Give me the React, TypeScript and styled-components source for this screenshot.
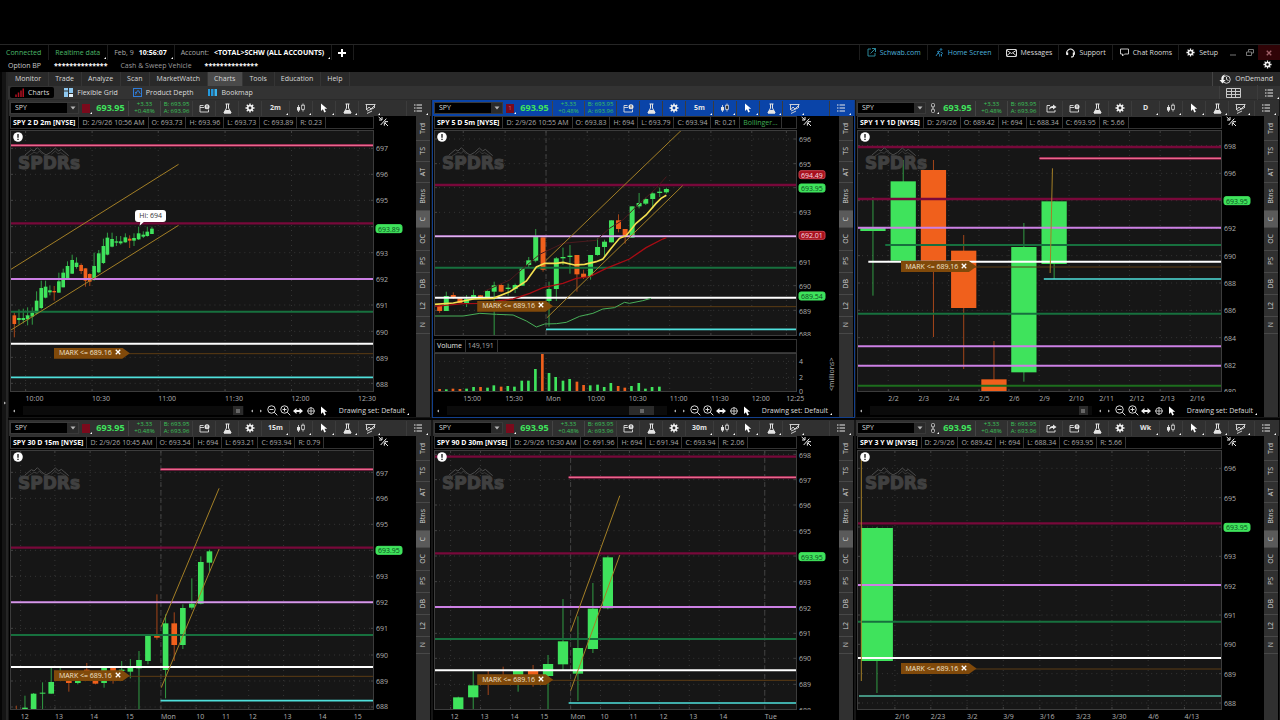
import React from 'react';
import styled, { createGlobalStyle, css } from 'styled-components';

const UP = '#3fe35c';
const DOWN = '#f0601c';
const GOLD = '#a48026';
const MAROON = '#78083a';
const VIOLET = '#cc80e4';
const GREEN = '#17703e';
const CYAN = '#4fe0dc';

const GlobalStyle = createGlobalStyle`
  * { box-sizing: border-box; }
  body { margin: 0; background: #000; }
  button, input { font: inherit; color: inherit; border: 0; padding: 0; margin: 0; background: none; }
  button { cursor: pointer; }
  a { color: inherit; text-decoration: none; }
`;

/* ---------- shell ---------- */

const Shell = styled.div`
  display: flex;
  flex-direction: column;
  height: 100vh;
  overflow: hidden;
  padding-top: 44px;
  background: #000;
  color: #d0d0d0;
  font: 7px/10px 'Open Sans', 'Noto Sans', sans-serif;
`;

const StatusBar = styled.header`
  flex: none;
  display: flex;
  align-items: center;
  height: 16px;
  border-top: 1px solid #262626;
  white-space: nowrap;
`;

const StatusItem = styled.div<{ $tone?: string }>`
  position: relative;
  display: flex;
  align-items: center;
  gap: 5px;
  height: 15px;
  padding: 0 7px 0 6px;
  color: ${(p) => p.$tone ?? '#acacac'};
  border-right: 1px solid #1c1c1c;
  b { color: #fff; }
`;

const Spacer = styled.div`
  flex: 1;
`;

const StatusLink = styled.a<{ $tone?: string }>`
  display: flex;
  align-items: center;
  gap: 4px;
  height: 15px;
  padding: 0 6px 0 7px;
  color: ${(p) => p.$tone ?? '#dcdcdc'};
  border-left: 1px solid #1c1c1c;
`;

const WindowButton = styled.button<{ $close?: boolean }>`
  display: grid;
  place-items: center;
  width: ${(p) => (p.$close ? 22 : 17)}px;
  height: 15px;
  color: #8a8a8a;
  background: ${(p) => (p.$close ? '#300407' : 'transparent')};
`;

const BalanceBar = styled.div`
  flex: none;
  display: flex;
  align-items: center;
  height: 12px;
  padding: 0 8px;
  b { color: #fff; }
`;

const BalanceItem = styled.div<{ $tone: string }>`
  display: flex;
  align-items: center;
  gap: 13px;
  padding-right: 13px;
  color: ${(p) => p.$tone};
`;

const Corner = styled.i`
  position: absolute;
  right: 1px;
  bottom: 1px;
  border: 1px solid transparent;
  border-right-color: #fff;
  border-bottom-color: #fff;
`;

const Body = styled.div`
  flex: 1;
  min-height: 0;
  display: flex;
`;

const Gutter = styled.aside`
  flex: none;
  width: 8px;
  padding-top: 328px;
  background: #141414;
  border-left: 2px solid #050505;
  border-right: 2px solid #262626;
  svg { display: block; }
`;

const Workspace = styled.main`
  flex: 1;
  min-width: 0;
`;

const MenuBar = styled.nav`
  display: flex;
  height: 14px;
  padding-left: 1px;
  background: #292929;
`;

const MenuTab = styled.button<{ $active?: boolean }>`
  padding: 0 7px 0 6px;
  border-right: 1px solid #353535;
  color: #d8d8d8;
  background: ${(p) => (p.$active ? '#4a4a4a' : 'transparent')};
`;

const OnDemand = styled.button`
  display: flex;
  align-items: center;
  gap: 4px;
  padding: 0 7px 0 6px;
  border-left: 1px solid #444;
  color: #dedede;
`;

const SubBar = styled.nav`
  display: flex;
  align-items: center;
  height: 14px;
  padding-left: 2px;
  background: #333;
  border-bottom: 1px solid #2a2a2a;
`;

const SubTab = styled.button<{ $active?: boolean }>`
  display: flex;
  align-items: center;
  gap: 4px;
  height: 11px;
  padding: 0 5px;
  margin-right: 5px;
  border-radius: 2px;
  color: #dcdcdc;
  background: ${(p) => (p.$active ? '#000' : 'transparent')};
`;

const SubTool = styled.button`
  position: relative;
  display: grid;
  place-items: center;
  width: 28px;
  height: 13px;
  border-left: 1px solid #3e3e3e;
`;

const SubGap = styled.div`
  width: 10px;
`;

const PanelGrid = styled.div`
  display: grid;
  grid-template-columns: 424fr 423fr 425fr;
  row-gap: 2px;
  background: #050505;
`;

/* ---------- chart panel ---------- */

const PanelBox = styled.section<{ $active?: boolean }>`
  display: flex;
  flex-direction: column;
  min-width: 0;
  background: #000;
  border: 1px solid ${(p) => (p.$active ? '#123f8c' : '#161616')};
  border-top: 0;
`;

const Toolbar = styled.div<{ $active?: boolean }>`
  display: flex;
  align-items: center;
  height: 16px;
  padding: 0 2px 0 1px;
  background: ${(p) => (p.$active ? '#0a44a8' : '#303030')};
`;

const SymbolField = styled.div`
  display: flex;
  width: 69px;
  height: 12px;
  background: #000;
  border: 1px solid #3a3a3a;
  input { flex: 1; min-width: 0; padding-left: 4px; color: #dcdcdc; }
`;

const DropButton = styled.button`
  display: grid;
  place-items: center;
  width: 11px;
  background: #2a2a2a;
`;

const LinkButton = styled.button`
  position: relative;
  display: grid;
  place-items: center;
  width: 14px;
  height: 14px;
`;

const LinkSwatch = styled.span`
  width: 8px;
  height: 9px;
  background: #7a0a1c;
  color: #d0606c;
  font-size: 6px;
  line-height: 9px;
  text-align: center;
`;

const LastPrice = styled.strong`
  width: 35px;
  color: #3fe35c;
  font-size: 9px;
  line-height: 14px;
  text-align: center;
`;

const MiniQuote = styled.div`
  width: 32px;
  height: 15px;
  border-left: 1px solid #444;
  color: #3cc45a;
  font-size: 6px;
  line-height: 7px;
  white-space: pre;
  text-align: center;
`;

const ToolButton = styled.button<{ $wide?: boolean }>`
  position: relative;
  display: grid;
  place-items: center;
  flex: none;
  width: ${(p) => (p.$wide ? 28 : 23)}px;
  height: 15px;
  border-left: 1px solid #3c3c3c;
  color: #e4e4e4;
  font-weight: 700;
`;

const PanelBody = styled.div`
  display: flex;
  padding-right: 1px;
`;

const ChartColumn = styled.div`
  flex: 1;
  min-width: 0;
  padding-left: 1px;
`;

const InfoRow = styled.div`
  display: flex;
  align-items: flex-start;
  height: 14px;
`;

const InfoStrip = styled.div`
  flex: 1;
  min-width: 0;
  display: flex;
  height: 13px;
  overflow: hidden;
  border: 1px solid #333;
  white-space: nowrap;
`;

const InfoCell = styled.span<{ $tone?: string; $strong?: boolean }>`
  padding: 0 3px;
  line-height: 11px;
  border-right: 1px solid #333;
  color: ${(p) => p.$tone ?? '#a8a8a8'};
  ${(p) => p.$strong && css`padding: 0 3px 0 2px; color: #fff; font-weight: 700;`}
`;

const AxisColumn = styled.div`
  flex: none;
  width: 42px;
  padding-left: 4px;
`;

const PlotRow = styled.div<{ $h: number }>`
  display: flex;
  height: ${(p) => p.$h}px;
`;

const PlotArea = styled.div`
  position: relative;
  flex: 1;
  min-width: 0;
  svg.plot { display: block; width: 100%; height: 100%; }
`;

const AxisSvg = styled.svg`
  flex: none;
  display: block;
  width: 42px;
  height: 100%;
  text { fill: #b0b0b0; font-size: 7px; }
`;

const TimeAxis = styled.div`
  height: 12px;
  padding-right: 42px;
  svg { display: block; width: 100%; height: 100%; overflow: visible; }
  text { fill: #b0b0b0; font-size: 7px; }
`;

const Watermark = styled.div`
  position: absolute;
  left: 8px;
  top: 17px;
  color: #404040;
  font: 700 17px/14px 'DejaVu Sans', sans-serif;
  -webkit-text-stroke: 1px #404040;
  svg { display: block; margin: 0 0 -1px 6px; }
`;

const Notice = styled.span`
  position: absolute;
  left: 3px;
  top: 2px;
`;

const OrderTag = styled.div`
  position: absolute;
  display: flex;
  align-items: center;
  gap: 3px;
  width: 76px;
  height: 11px;
  margin-top: -6px;
  padding-left: 5px;
  background: #80490a;
  color: #f0e2cc;
  white-space: nowrap;
  clip-path: polygon(0 0, 90% 0, 100% 50%, 90% 100%, 0 100%);
`;

const Callout = styled.div`
  position: absolute;
  padding: 1px 4px 0;
  height: 12px;
  border-radius: 3px;
  background: #fff;
  color: #333;
`;

const ScrollRow = styled.div`
  display: flex;
  align-items: center;
  height: 13px;
  padding: 0 6px 0 1px;
  color: #c8c8c8;
`;

const ScrollTrack = styled.div`
  flex: 1;
  display: flex;
  height: 9px;
  margin-left: 6px;
  background: #0b0b0b;
`;

const ScrollThumb = styled.span<{ $left: number; $w: number }>`
  flex: none;
  display: grid;
  place-items: center;
  margin-left: ${(p) => p.$left}%;
  width: ${(p) => p.$w}px;
  height: 9px;
  background: #2b2b2b;
`;

const ScrollTools = styled.div`
  display: flex;
  align-items: center;
  margin-left: 4px;
`;

const ScrollTool = styled.button<{ $narrow?: boolean }>`
  display: grid;
  place-items: center;
  width: ${(p) => (p.$narrow ? 9 : 13)}px;
  height: 12px;
  svg { display: block; }
`;

const DrawingSet = styled.button`
  position: relative;
  margin-left: 8px;
  padding-right: 5px;
  color: #dcdcdc;
  white-space: nowrap;
`;

const SideTabs = styled.nav`
  flex: none;
  display: flex;
  flex-direction: column;
  width: 14px;
  background: #303030;
`;

const SideTab = styled.button<{ $h: number; $active?: boolean }>`
  display: grid;
  place-items: center;
  height: ${(p) => p.$h}px;
  border-bottom: 1px solid #484848;
  color: #d0d0d0;
  background: ${(p) => (p.$active ? '#5a5a5a' : 'transparent')};
  span { writing-mode: vertical-rl; transform: rotate(180deg); }
`;

const VolumeHead = styled.div`
  display: flex;
  height: 14px;
  margin: 3px 42px 0 0;
  border: 1px solid #333;
`;

const VolumeCell = styled.span<{ $strong?: boolean }>`
  padding: 0 3px 0 2px;
  line-height: 12px;
  border-right: 1px solid #333;
  color: ${(p) => (p.$strong ? '#e4e4e4' : '#a8a8a8')};
`;

/* ---------- icons ---------- */

const Flask = () => (
  <svg width="11" height="11" viewBox="0 0 22 22" fill="none" stroke="#e4e4e4" strokeWidth="2">
    <path d="M7 2h8M9 2v8L4 20h14L13 10V2" />
    <path d="M6.5 15h9l2.5 5H4z" fill="#e4e4e4" />
  </svg>
);

const Gear = ({ size = 10 }: { size?: number }) => (
  <svg width={size} height={size} viewBox="0 0 20 20" fill="none" stroke="#f2f2f2">
    <circle cx="10" cy="10" r="4.6" strokeWidth="3.4" />
    <path strokeWidth="2.8" d="M10 1v4M10 15v4M1 10h4M15 10h4M3.6 3.6l2.8 2.8M13.6 13.6l2.8 2.8M16.4 3.6l-2.8 2.8M6.4 13.6l-2.8 2.8" />
  </svg>
);

const EventCard = () => (
  <svg width="11" height="9" viewBox="0 0 22 18" fill="none" stroke="#dcdcdc" strokeWidth="1.8">
    <path d="M9 3H2v13h17v-5M2 7h8" />
    <circle cx="16" cy="5.5" r="5" fill="#e8e8e8" stroke="none" />
    <path d="M16 2.5v3.6M16 7v1.5" stroke="#333" />
  </svg>
);

const Candles = () => (
  <svg width="10" height="10" viewBox="0 0 20 20" fill="#e4e4e4" stroke="#e4e4e4" strokeWidth="1.6">
    <path d="M5 4v14M14 1v16" />
    <rect x="2" y="8" width="6" height="7" stroke="none" />
    <rect x="11.4" y="4.4" width="5.2" height="8.2" fill="#222" />
  </svg>
);

const Pointer = () => (
  <svg width="8" height="10" viewBox="0 0 16 20" fill="#fff">
    <path d="M2 1v15l3.8-3.4L8.600 19l3.200-1.400L9 11.600h5.400z" />
  </svg>
);

const Patterns = () => (
  <svg width="11" height="11" viewBox="0 0 22 22" fill="none" stroke="#dcdcdc" strokeWidth="1.8">
    <path d="M1 3h20M3 3v11l5-6 4 4 7-7M19 3v7M4 16l14-6M4 21l10-5" />
  </svg>
);

const ShareIcon = () => (
  <svg width="11" height="9" viewBox="0 0 22 18" fill="none" stroke="#e4e4e4" strokeWidth="1.8">
    <path d="M8 3H2v13h16v-4" />
    <path d="M14 1l7 5-7 5V8c-4 0-6 1-8 4 0-5 3-8 8-8z" fill="#e4e4e4" stroke="none" />
  </svg>
);

const ListIcon = () => (
  <svg width="8" height="8" viewBox="0 0 16 16" fill="none" stroke="#e8e8e8" strokeWidth="2">
    <path d="M0 2h3M0 8h3M0 14h3M5 2h11M5 8h11M5 14h11" />
  </svg>
);

const LinkChain = () => (
  <svg width="6" height="10" viewBox="0 0 12 20" fill="none" stroke="#c0c0c0" strokeWidth="1.8">
    <rect x="3" y="1" width="6" height="7" rx="2" />
    <rect x="3" y="12" width="6" height="7" rx="2" />
    <path d="M6 6v8" />
  </svg>
);

const ExpandIcon = () => (
  <svg width="11" height="11" viewBox="0 0 33 33" fill="none" stroke="#ececec" strokeWidth="3">
    <path d="M2 3l9 8M12 3v9H3M25 8L8 27M30 17h-9v5M19 29v-9M21 21l9 9" />
  </svg>
);

const NoticeIcon = () => (
  <svg width="10" height="10" viewBox="0 0 20 20">
    <circle cx="10" cy="10" r="9.6" fill="#fff" />
    <path d="M10 4v7.5M10 13.6v2.6" stroke="#111" strokeWidth="2.6" />
  </svg>
);

const Mountains = () => (
  <svg width="46" height="10" viewBox="0 0 138 30" fill="none" stroke="#4c4c4c" strokeWidth="3">
    <path d="M2 25L22 8l8 4 10-10 14 14 12 8 14-8L94 3l10 9 8-5 22 19" />
    <path d="M12 27l18-11 10 3 6-7 10 10M60 27h18M82 22l12-10 8 8 8-3 18 11" strokeWidth="2" />
  </svg>
);

const ZoomGlass = ({ plus }: { plus?: boolean }) => (
  <svg width="11" height="11" viewBox="0 0 22 22" fill="none" stroke="#e4e4e4" strokeWidth="1.9">
    <circle cx="9" cy="9" r="7.5" />
    <path d={plus ? 'M14.5 14.5l6 6M5 9h8M9 5v8' : 'M14.5 14.5l6 6M5 9h8'} />
  </svg>
);

const WidthArrows = () => (
  <svg width="10" height="8" viewBox="0 0 20 16" fill="#f2f2f2">
    <path d="M0 8l7-6v4h6V2l7 6-7 6v-4H7v4z" />
  </svg>
);

const Crosshair = () => (
  <svg width="10" height="10" viewBox="0 0 20 20" fill="none" stroke="#dcdcdc" strokeWidth="1.7">
    <circle cx="10" cy="10" r="6.5" />
    <path d="M10 2v16M2 10h16" />
  </svg>
);

const Arrow = ({ dir }: { dir: 'left' | 'right' | 'down' }) => (
  <svg width="6" height="6" viewBox="0 0 12 12" fill="#b4b4b4">
    <path d={dir === 'left' ? 'M8 3v6L4 6z' : dir === 'right' ? 'M4 3v6l4-3z' : 'M1 3h10L6 9z'} />
  </svg>
);

const CloseMark = ({ color }: { color: string }) => (
  <svg width="6" height="6" viewBox="0 0 12 12" fill="none" stroke={color} strokeWidth="2.6">
    <path d="M1.5 1.5l9 9M10.5 1.5l-9 9" />
  </svg>
);

/* ---------- chart model ---------- */

type Candle = [x: number, top: number, bottom: number, high: number, low: number, down?: 1];
type Point = [number, number];
interface Level { y: number; color: string; w: number; from?: number; core?: string; coreW?: number }
interface Badge { y: number; text: string; tone: 'green' | 'red' }
interface Curve { points: Point[]; color: string; w: number }

interface ChartSpec {
  id: string;
  title: string;
  info: string[];
  study?: string;
  interval: string;
  link: 'red' | 'one' | 'chain';
  active?: boolean;
  height: number;
  view: [number, number, number, number];
  prices: [string, number][];
  rows: number[];
  times: [string, number][];
  sessions?: number[];
  badges: Badge[];
  levels: Level[];
  candles: Candle[];
  candleWidth: number;
  curves?: Curve[];
  alert: { x: number; y: number };
  callout?: { x: number; y: number; text: string };
  thumb: { left: number; w: number };
  volume?: boolean;
}

const pink = (y: number, from?: number): Level => ({ y, from, color: '#8a2048', w: 8, core: '#e8688c', coreW: 4 });
const maroon = (y: number): Level => ({ y, color: MAROON, w: 7 });
const violet = (y: number, core?: string): Level => ({ y, color: VIOLET, w: 6, core, coreW: 2 });
const green = (y: number, from?: number, color = GREEN): Level => ({ y, from, color, w: 6 });
const white = (y: number, from?: number): Level => ({ y, from, color: '#fff', w: 6 });
const cyan = (y: number, from?: number, color = CYAN): Level => ({ y, from, color, w: 5 });
const line = (a: Point, b: Point): Curve => ({ points: [a, b], color: GOLD, w: 3 });

const charts: ChartSpec[] = [
  {
    id: '2m',
    title: 'SPY 2 D 2m [NYSE]',
    info: ['D: 2/9/26 10:56 AM', 'O: 693.73', 'H: 693.96', 'L: 693.73', 'C: 693.89', 'R: 0.23'],
    interval: '2m',
    link: 'red',
    height: 262,
    view: [30, 30, 1095, 786],
    prices: [['697', 85], ['696', 163], ['695', 241], ['693', 399], ['692', 477], ['691', 555], ['690', 635], ['689', 713], ['688', 791]],
    rows: [85, 163, 241, 320, 398, 477, 555, 634, 712, 790],
    times: [['10:00', 77], ['10:30', 277], ['11:00', 476], ['11:30', 677], ['12:00', 877], ['12:30', 1077]],
    badges: [{ y: 326, text: '693.89', tone: 'green' }],
    levels: [pink(76), maroon(310), violet(477), green(575), white(671), cyan(772)],
    candleWidth: 11,
    candles: [
      [43, 586, 612, 578, 652, 1], [57, 594, 600, 568, 614], [70, 594, 600, 566, 610], [83, 586, 598, 562, 616],
      [97, 578, 590, 562, 614], [110, 542, 580, 514, 583], [124, 504, 564, 482, 568], [137, 500, 533, 482, 535],
      [150, 511, 517, 496, 526], [163, 513, 517, 498, 542, 1], [177, 484, 518, 458, 518], [190, 458, 502, 446, 502],
      [203, 438, 474, 424, 478], [217, 420, 461, 404, 462], [230, 428, 441, 412, 446], [244, 435, 453, 430, 462, 1],
      [257, 445, 482, 445, 500, 1], [270, 462, 485, 460, 498, 1], [283, 438, 476, 398, 482], [297, 400, 457, 390, 460],
      [311, 378, 429, 356, 432], [323, 353, 404, 338, 406], [337, 357, 380, 338, 382], [350, 364, 368, 348, 378],
      [363, 364, 370, 348, 374], [377, 352, 367, 340, 368], [390, 356, 362, 346, 384, 1], [403, 354, 362, 340, 378],
      [417, 340, 358, 320, 360], [431, 344, 350, 334, 354], [443, 335, 348, 320, 350], [457, 326, 342, 320, 342],
    ],
    curves: [line([33, 448], [537, 133]), line([33, 630], [537, 316])],
    alert: { x: 162, y: 701 },
    callout: { x: 407, y: 270, text: 'Hi: 694' },
    thumb: { left: 95, w: 10 },
  },
  {
    id: '5m',
    title: 'SPY 5 D 5m [NYSE]',
    info: ['D: 2/9/26 10:55 AM', 'O: 693.83', 'H: 694', 'L: 693.79', 'C: 693.94', 'R: 0.21'],
    study: 'Bollinger...',
    interval: '5m',
    link: 'one',
    active: true,
    height: 206,
    view: [12, 105, 1092, 618],
    prices: [['696', 132], ['695', 206], ['693', 352], ['691', 500], ['690', 572], ['689', 647], ['688', 718]],
    rows: [132, 206, 278, 352, 424, 500, 572, 646],
    times: [['15:00', 100], ['15:30', 226], ['Mon', 349], ['10:00', 473], ['10:30', 598], ['11:00', 721], ['11:30', 845], ['12:00', 968], ['12:25', 1072]],
    sessions: [349],
    badges: [{ y: 239, text: '694.49', tone: 'red' }, { y: 279, text: '693.95', tone: 'green' }, { y: 421, text: '692.01', tone: 'red' }, { y: 603, text: '689.54', tone: 'green' }],
    levels: [maroon(270), violet(424, '#ecdcf4'), green(518), white(608), cyan(703, 349)],
    candleWidth: 15,
    candles: [
      [29, 632, 648, 630, 654, 1], [49, 603, 648, 590, 648], [70, 600, 606, 592, 612, 1], [90, 610, 624, 608, 624, 1],
      [110, 612, 624, 600, 636], [131, 600, 610, 584, 614], [152, 601, 606, 600, 607, 1], [173, 588, 610, 586, 610],
      [193, 571, 590, 560, 723], [214, 570, 590, 566, 592, 1], [235, 578, 582, 566, 602], [256, 570, 582, 566, 594],
      [277, 520, 572, 520, 572], [297, 496, 510, 486, 518], [318, 426, 497, 402, 502], [340, 427, 524, 427, 530, 1],
      [358, 582, 618, 560, 695], [380, 490, 582, 486, 618], [400, 486, 490, 458, 510], [421, 482, 486, 450, 536],
      [442, 480, 538, 480, 590, 1], [462, 536, 546, 524, 552, 1], [483, 480, 543, 480, 554], [504, 456, 480, 430, 482],
      [525, 440, 456, 434, 486], [546, 376, 442, 376, 442], [567, 376, 402, 358, 412, 1], [587, 402, 426, 402, 446, 1],
      [608, 334, 428, 334, 428], [629, 324, 334, 294, 340], [649, 312, 326, 308, 330], [670, 295, 312, 292, 340],
      [691, 290, 294, 278, 306], [711, 282, 292, 278, 296],
    ],
    curves: [
      { color: '#4c1a1e', w: 3, points: [[160, 590], [240, 555], [280, 520], [330, 478], [400, 445], [420, 443], [500, 436], [540, 400], [580, 375], [620, 335], [680, 280], [711, 245]] },
      { color: '#a80c14', w: 4, points: [[14, 634], [100, 626], [150, 625], [250, 612], [300, 595], [340, 578], [400, 565], [440, 550], [480, 545], [530, 520], [560, 508], [600, 492], [650, 458], [700, 432], [711, 428]] },
      { color: '#48b058', w: 3, points: [[14, 663], [100, 663], [150, 655], [200, 658], [250, 660], [290, 678], [320, 696], [345, 687], [380, 686], [410, 682], [450, 664], [490, 655], [520, 642], [555, 638], [585, 622], [600, 625], [640, 617], [665, 610]] },
      { color: '#f4e050', w: 5, points: [[14, 628], [70, 624], [130, 612], [190, 610], [240, 590], [290, 558], [320, 516], [345, 505], [380, 505], [400, 502], [435, 510], [465, 508], [500, 500], [520, 492], [545, 460], [570, 430], [590, 422], [620, 385], [650, 360], [680, 325], [695, 310], [711, 301]] },
      line([349, 496], [757, 105]),
      line([352, 668], [760, 272]),
    ],
    alert: { x: 142, y: 635 },
    thumb: { left: 83, w: 25 },
    volume: true,
  },
  {
    id: '1d',
    title: 'SPY 1 Y 1D [NYSE]',
    info: ['D: 2/9/26', 'O: 689.42', 'H: 694', 'L: 688.34', 'C: 693.95', 'R: 5.66'],
    interval: 'D',
    link: 'chain',
    height: 262,
    view: [21, 105, 1098, 786],
    prices: [['698', 152], ['696', 235], ['692', 400], ['690', 482], ['688', 564], ['686', 646], ['684', 728], ['682', 811], ['680', 889]],
    rows: [152, 235, 317, 400, 482, 564, 646, 728, 811],
    times: [['2/2', 115], ['2/3', 206], ['2/4', 297], ['2/5', 388], ['2/6', 478], ['2/9', 569], ['2/10', 659], ['2/11', 750], ['2/12', 841], ['2/13', 933], ['2/16', 1023]],
    badges: [{ y: 317, text: '693.95', tone: 'green' }],
    levels: [
      maroon(156), pink(190, 570), maroon(312), violet(398), green(450, 106), white(500, 55), cyan(552, 583),
      green(656), violet(754), violet(812), green(872, 21, '#1d6e1d'),
    ],
    candleWidth: 76,
    candles: [
      [69, 399, 408, 306, 602], [160, 259, 497, 195, 497], [251, 225, 497, 195, 726, 1], [342, 467, 639, 420, 822, 1],
      [433, 853, 891, 738, 891, 1], [523, 456, 832, 384, 860], [614, 319, 507, 319, 552],
    ],
    curves: [line([609, 220], [602, 534])],
    alert: { x: 152, y: 516 },
    thumb: { left: 94, w: 9 },
  },
  {
    id: '15m',
    title: 'SPY 30 D 15m [NYSE]',
    info: ['D: 2/9/26 10:45 AM', 'O: 693.54', 'H: 694', 'L: 693.21', 'C: 693.94', 'R: 0.79'],
    interval: '15m',
    link: 'red',
    height: 260,
    view: [30, 105, 1095, 780],
    prices: [['697', 173], ['696', 250], ['695', 328], ['693', 484], ['692', 562], ['691', 640], ['690', 720], ['689', 798], ['688', 874]],
    rows: [172, 250, 328, 406, 484, 562, 640, 720, 798, 876],
    times: [['12', 62], ['13', 165], ['14', 271], ['15', 378], ['Mon', 484], ['10', 590], ['11', 668], ['12', 748], ['13', 853], ['14', 958], ['15', 1064]],
    sessions: [484],
    badges: [{ y: 406, text: '693.95', tone: 'green' }],
    levels: [pink(163, 483), maroon(398), violet(562, '#dcb0ec'), green(660), white(756), cyan(857, 483)],
    candleWidth: 17,
    candles: [
      [49, 882, 885, 872, 885, 1], [75, 878, 885, 842, 885], [101, 836, 882, 834, 885], [128, 833, 836, 802, 885],
      [154, 801, 836, 758, 836], [181, 770, 780, 755, 796], [207, 786, 804, 770, 830, 1], [234, 790, 804, 780, 808],
      [261, 764, 770, 744, 796, 1], [287, 768, 806, 768, 808, 1], [313, 758, 804, 754, 818], [340, 758, 790, 754, 806, 1],
      [366, 764, 768, 738, 790], [392, 758, 770, 732, 790], [418, 735, 760, 708, 885], [445, 663, 738, 663, 748],
      [472, 663, 668, 538, 674, 1], [498, 625, 765, 598, 850], [524, 625, 690, 592, 738, 1], [550, 579, 690, 568, 702],
      [577, 566, 578, 490, 584], [604, 441, 566, 424, 568], [630, 409, 443, 404, 470],
    ],
    curves: [line([485, 635], [659, 220]), line([485, 818], [659, 402])],
    alert: { x: 162, y: 784 },
    thumb: { left: 95, w: 10 },
  },
  {
    id: '30m',
    title: 'SPY 90 D 30m [NYSE]',
    info: ['D: 2/9/26 10:30 AM', 'O: 691.96', 'H: 694', 'L: 691.94', 'C: 693.94', 'R: 2.06'],
    interval: '30m',
    link: 'red',
    height: 260,
    view: [12, 105, 1092, 780],
    prices: [['698', 119], ['697', 194], ['696', 270], ['695', 348], ['693', 500], ['692', 578], ['691', 655], ['690', 730], ['689', 808], ['688', 884]],
    rows: [118, 194, 270, 347, 423, 500, 578, 655, 730, 808],
    times: [['12', 62], ['13', 152], ['14', 242], ['15', 332], ['Mon', 423], ['10', 513], ['11', 600], ['12', 690], ['13', 780], ['14', 870], ['Tue', 1007]],
    sessions: [423, 1007],
    badges: [{ y: 425, text: '693.95', tone: 'green' }],
    levels: [maroon(125), pink(187, 417), maroon(415), violet(576), green(672), white(766), cyan(864, 417)],
    candleWidth: 31,
    candles: [
      [85, 847, 885, 845, 885], [130, 811, 847, 768, 885], [175, 790, 796, 768, 840, 1], [220, 780, 785, 755, 800, 1],
      [265, 767, 800, 765, 830], [310, 767, 800, 750, 815, 1], [355, 747, 783, 720, 885], [400, 679, 748, 552, 765],
      [445, 699, 776, 604, 858], [490, 581, 702, 504, 714], [535, 427, 580, 422, 583],
    ],
    curves: [line([423, 650], [571, 242]), line([423, 827], [571, 420])],
    alert: { x: 142, y: 796 },
    thumb: { left: 93, w: 14 },
  },
  {
    id: 'wk',
    title: 'SPY 3 Y W [NYSE]',
    info: ['D: 2/9/26', 'O: 689.42', 'H: 694', 'L: 688.34', 'C: 693.95', 'R: 5.66'],
    interval: 'Wk',
    link: 'chain',
    height: 260,
    view: [21, 105, 1098, 780],
    prices: [['696', 160], ['695', 248], ['693', 424], ['692', 512], ['691', 600], ['690', 688], ['689', 776], ['688', 864]],
    rows: [160, 248, 336, 424, 512, 600, 688, 776, 864],
    times: [['2/16', 135], ['2/23', 243], ['3/2', 352], ['3/9', 461], ['3/16', 571], ['3/23', 680], ['3/30', 788], ['4/6', 897], ['4/13', 1006]],
    badges: [{ y: 337, text: '693.95', tone: 'green' }],
    levels: [maroon(325), violet(510), green(620), white(729), cyan(843, 27, '#54bca4')],
    candleWidth: 96,
    candles: [[81, 339, 738, 336, 834]],
    curves: [line([34, 135], [34, 798])],
    alert: { x: 152, y: 762 },
    thumb: { left: 94, w: 9 },
  },
];

const volumeBars: [number, number, 1?][] = [
  [29, 402, 1], [49, 403], [69, 401, 1], [90, 402, 1], [110, 401], [131, 396], [152, 396, 1], [173, 398], [192, 391],
  [214, 395, 1], [234, 393], [254, 395], [276, 377], [296, 377], [317, 342], [338, 297, 1], [358, 354], [378, 366],
  [400, 377], [420, 372], [442, 380, 1], [462, 390, 1], [482, 391], [504, 389], [524, 396], [544, 384], [566, 393, 1],
  [586, 398, 1], [606, 393], [628, 384], [648, 401], [668, 396], [690, 395], [711, 408],
];

const pct = (v: number, start: number, size: number) => `${((v - start) / size) * 100}%`;

/* ---------- chart parts ---------- */

const Plot = ({ c }: { c: ChartSpec }) => {
  const [vx, vy, vw, vh] = c.view;
  return (
    <svg className="plot" viewBox={c.view.join(' ')} preserveAspectRatio="none">
      <rect x={vx} y={vy} width={vw} height={vh} fill="#161616" />
      <g stroke="#363636" strokeWidth="3" strokeDasharray="3 12">
        {c.rows.map((y) => <path key={y} d={`M${vx} ${y}h${vw}`} />)}
        {c.times.map(([t, x]) => <path key={t + x} d={`M${x} ${vy}v${vh}`} />)}
      </g>
      <g stroke="#444" strokeWidth="3">
        {c.times.map(([t, x]) => <path key={t + x} d={`M${x} ${vy}v9M${x} ${vy + vh}v-9`} />)}
        {c.rows.map((y) => <path key={y} d={`M${vx} ${y}h9M${vx + vw} ${y}h-9`} />)}
      </g>
      {c.sessions?.map((x) => (
        <path key={x} d={`M${x} ${vy}v${vh}`} stroke="#424242" strokeWidth="3" strokeDasharray="15 9" />
      ))}
      {c.candles.map(([x, top, bottom, high, low, down]) => (
        <g key={x} fill={down ? DOWN : UP}>
          <rect x={x - 1.5} y={high} width="3" height={low - high} opacity="0.65" />
          <rect x={x - c.candleWidth / 2} y={top} width={c.candleWidth} height={bottom - top} />
        </g>
      ))}
      <path d={`M${c.alert.x + 220} ${c.alert.y}H${vx + vw}`} stroke="#5c3c14" strokeWidth="3" />
      {c.levels.map((l) => (
        <g key={l.y}>
          <path d={`M${l.from ?? vx} ${l.y}H${vx + vw}`} stroke={l.color} strokeWidth={l.w} />
          {l.core && <path d={`M${l.from ?? vx} ${l.y}H${vx + vw}`} stroke={l.core} strokeWidth={l.coreW} />}
        </g>
      ))}
      {c.curves?.map((k, i) => (
        <polyline key={i} points={k.points.join(' ')} fill="none" stroke={k.color} strokeWidth={k.w} />
      ))}
      {c.callout && (
        <path d={`M${c.callout.x + 16} ${c.callout.y + 30}h16l-19 17z`} fill="#fff" />
      )}
      <rect x={vx + 1.5} y={vy + 1.5} width={vw - 3} height={vh - 3} fill="none" stroke="#3c3c3c" strokeWidth="3" />
    </svg>
  );
};

const PriceAxis = ({ c }: { c: ChartSpec }) => {
  const [, vy, , vh] = c.view;
  return (
    <AxisSvg>
      {c.prices.map(([t, y]) => (
        <text key={t} x="2" y={pct(y, vy, vh)} dy="3">{t}</text>
      ))}
      {c.badges.map((b) => (
        <svg key={b.text} y={pct(b.y, vy, vh)} overflow="visible">
          <rect
            x="2" y="-4" width="26" height="8" rx="2"
            fill={b.tone === 'green' ? '#3fe35c' : '#a8101c'}
            stroke={b.tone === 'green' ? '#3fe35c' : '#c8404c'}
          />
          <text x="4" y="3" style={{ fill: b.tone === 'green' ? '#0c4a1c' : '#f4dce0' }}>{b.text}</text>
        </svg>
      ))}
    </AxisSvg>
  );
};

const VolumePane = () => (
  <>
    <VolumeHead>
      <VolumeCell $strong>Volume</VolumeCell>
      <VolumeCell>149,191</VolumeCell>
    </VolumeHead>
    <PlotRow $h={39}>
      <PlotArea>
        <svg className="plot" viewBox="12 294 1092 117" preserveAspectRatio="none">
          <rect x="12" y="294" width="1092" height="117" fill="#161616" />
          <g stroke="#363636" strokeWidth="3" strokeDasharray="3 12">
            <path d="M12 319h1092M12 367h1092M100 294v117M226 294v117M349 294v117M473 294v117M598 294v117M721 294v117M845 294v117M968 294v117M1072 294v117" />
          </g>
          {volumeBars.map(([x, top, down]) => (
            <rect key={x} x={x - 4} y={top} width="8" height={411 - top} fill={down ? DOWN : UP} />
          ))}
          <rect x="13.5" y="295.5" width="1089" height="114" fill="none" stroke="#3c3c3c" strokeWidth="3" />
        </svg>
      </PlotArea>
      <AxisSvg overflow="visible">
        <text x="2" y="11">4</text>
        <text x="2" y="27">2</text>
        <text x="2" y="41">0</text>
        <text transform="translate(37 38) rotate(-90)">&lt;millions&gt;</text>
      </AxisSvg>
    </PlotRow>
  </>
);

const sideTabs: [string, number][] = [
  ['Trd', 25], ['TS', 21], ['AT', 21], ['Btns', 28], ['C', 17], ['OC', 23], ['PS', 22], ['DB', 22], ['L2', 22], ['N', 17],
];

const ChartPanel = ({ c }: { c: ChartSpec }) => {
  const [vx, vy, vw, vh] = c.view;
  return (
    <PanelBox $active={c.active}>
      <Toolbar $active={c.active}>
        <SymbolField>
          <input aria-label={`Symbol, ${c.title}`} defaultValue="SPY" />
          <DropButton aria-label="Recent symbols"><Arrow dir="down" /></DropButton>
        </SymbolField>
        <LinkButton aria-label="Symbol link">
          {c.link === 'chain' ? <LinkChain /> : <LinkSwatch>{c.link === 'one' ? '1' : ''}</LinkSwatch>}
          <Corner />
        </LinkButton>
        <LastPrice>693.95</LastPrice>
        <MiniQuote>{'+3.33\n+0.48%'}</MiniQuote>
        <MiniQuote>{'B: 693.95\nA: 693.96'}</MiniQuote>
        {c.link === 'chain' && <ToolButton aria-label="Share"><ShareIcon /></ToolButton>}
        <ToolButton aria-label="Events"><EventCard /></ToolButton>
        <ToolButton aria-label="Studies"><Flask /></ToolButton>
        <ToolButton aria-label="Chart settings"><Gear /></ToolButton>
        <ToolButton $wide>{c.interval}<Corner /></ToolButton>
        <ToolButton aria-label="Chart style"><Candles /><Corner /></ToolButton>
        <ToolButton aria-label="Cursor"><Pointer /><Corner /></ToolButton>
        <ToolButton aria-label="Edit studies"><Flask /><Corner /></ToolButton>
        <ToolButton aria-label="Patterns"><Patterns /><Corner /></ToolButton>
        <Spacer />
        <ToolButton aria-label="Panel menu"><ListIcon /><Corner /></ToolButton>
      </Toolbar>
      <PanelBody>
        <ChartColumn>
          <InfoRow>
            <InfoStrip>
              <InfoCell $strong>{c.title}</InfoCell>
              {c.info.map((t) => <InfoCell key={t}>{t}</InfoCell>)}
              {c.study && <InfoCell $tone="#3fae54">{c.study}</InfoCell>}
            </InfoStrip>
            <AxisColumn><ExpandIcon /></AxisColumn>
          </InfoRow>
          <PlotRow $h={c.height}>
            <PlotArea>
              <Plot c={c} />
              <Watermark><Mountains />SPDRs</Watermark>
              <Notice><NoticeIcon /></Notice>
              <OrderTag style={{ left: pct(c.alert.x, vx, vw), top: pct(c.alert.y, vy, vh) }}>
                MARK &lt;= 689.16
                <button aria-label="Cancel alert"><CloseMark color="#fff" /></button>
              </OrderTag>
              {c.callout && (
                <Callout style={{ left: pct(c.callout.x, vx, vw), top: pct(c.callout.y, vy, vh) }}>
                  {c.callout.text}
                </Callout>
              )}
            </PlotArea>
            <PriceAxis c={c} />
          </PlotRow>
          {c.volume && <VolumePane />}
          <TimeAxis>
            <svg>
              {c.times.map(([t, x]) => <text key={t + x} x={pct(x, vx, vw)} y="9">{t}</text>)}
            </svg>
          </TimeAxis>
          <ScrollRow>
            <Arrow dir="left" />
            <ScrollTrack><ScrollThumb $left={c.thumb.left} $w={c.thumb.w}>
              <svg width="4" height="4"><rect width="4" height="4" fill="#666" /></svg>
            </ScrollThumb></ScrollTrack>
            <ScrollTools>
              <ScrollTool $narrow aria-label="Scroll left"><Arrow dir="left" /></ScrollTool>
              <ScrollTool $narrow aria-label="Scroll right"><Arrow dir="right" /></ScrollTool>
              <ScrollTool aria-label="Zoom out"><ZoomGlass /></ScrollTool>
              <ScrollTool aria-label="Zoom in"><ZoomGlass plus /></ScrollTool>
              <ScrollTool aria-label="Fit width"><WidthArrows /></ScrollTool>
              <ScrollTool aria-label="Crosshair"><Crosshair /></ScrollTool>
              <ScrollTool aria-label="Pointer"><Pointer /></ScrollTool>
            </ScrollTools>
            <DrawingSet>Drawing set: Default<Corner /></DrawingSet>
          </ScrollRow>
        </ChartColumn>
        <SideTabs>
          {sideTabs.map(([t, h]) => (
            <SideTab key={t} $h={h} $active={t === 'C'}><span>{t}</span></SideTab>
          ))}
        </SideTabs>
      </PanelBody>
    </PanelBox>
  );
};

const App = () => (
  <Shell>
    <GlobalStyle />
    <StatusBar>
      <StatusItem $tone="#4cb86a">Connected</StatusItem>
      <StatusItem $tone="#4cb86a">Realtime data<Corner /></StatusItem>
      <StatusItem>Feb, 9 <b>10:56:07</b><Corner /></StatusItem>
      <StatusItem>Account: <b>&lt;TOTAL&gt;SCHW (ALL ACCOUNTS)</b><Corner /></StatusItem>
      <StatusItem as="button" aria-label="Add account">
        <svg width="8" height="8" viewBox="0 0 8 8"><path d="M4 0v8M0 4h8" stroke="#fff" strokeWidth="2" /></svg>
      </StatusItem>
      <Spacer />
      <StatusLink href="#schwab" $tone="#4cb0dc">
        <svg width="9" height="9" viewBox="0 0 18 18" fill="none" stroke="#2f94a8" strokeWidth="1.8"><path d="M8 2H2v14h14v-6M10 1h7v7M17 1L7 11" /></svg>
        Schwab.com
      </StatusLink>
      <StatusLink href="#home" $tone="#4cb0dc">
        <svg width="9" height="9" viewBox="0 0 18 18" fill="none" stroke="#2f94c8" strokeWidth="1.8"><circle cx="12" cy="3" r="1.6" /><path d="M10 6l-4 4 4 3-1 4M6 10l-4 6M8 6L4 8M11 8l5 3M13 12v5" /></svg>
        Home Screen
      </StatusLink>
      <StatusLink href="#messages">
        <svg width="11" height="8" viewBox="0 0 22 16" fill="none" stroke="#d8d8d8" strokeWidth="2"><rect x="1" y="1" width="20" height="14" rx="1" /><path d="M2 3l9 6 9-6M2 13l6-5M20 13l-6-5" /></svg>
        Messages
      </StatusLink>
      <StatusLink href="#support">
        <svg width="9" height="10" viewBox="0 0 18 20" fill="none" stroke="#f0f0f0" strokeWidth="2.2"><path d="M3 14a7.4 7.4 0 1 1 12 0M15 11v4c0 2-2 3-5 3" /><path d="M2.6 9v5M15.4 9v5" strokeWidth="3.6" /></svg>
        Support
      </StatusLink>
      <StatusLink href="#chat">
        <svg width="9" height="9" viewBox="0 0 18 18" fill="none" stroke="#d8d8d8" strokeWidth="1.8"><path d="M1 2h16v10H9l-4 4v-4H1z" /></svg>
        Chat Rooms
      </StatusLink>
      <StatusLink href="#setup"><Gear size={9} />Setup</StatusLink>
      <WindowButton aria-label="Minimize"><svg width="6" height="6"><path d="M0 5h6" stroke="#777" /></svg></WindowButton>
      <WindowButton aria-label="Restore"><svg width="8" height="7" viewBox="0 0 16 14" fill="none" stroke="#777" strokeWidth="2"><path d="M1 6h10v7H1zM5 6V1h10v7h-4" /></svg></WindowButton>
      <WindowButton $close aria-label="Close"><CloseMark color="#a06068" /></WindowButton>
    </StatusBar>
    <BalanceBar>
      <BalanceItem $tone="#c8c8c8">Option BP <b>**************</b></BalanceItem>
      <BalanceItem $tone="#9c9c9c">Cash &amp; Sweep Vehicle <b>**************</b></BalanceItem>
      <Spacer />
      <button aria-label="Balance settings"><Gear size={9} /></button>
    </BalanceBar>
    <Body>
      <Gutter><Arrow dir="right" /></Gutter>
      <Workspace>
        <MenuBar>
          {['Monitor', 'Trade', 'Analyze', 'Scan', 'MarketWatch', 'Charts', 'Tools', 'Education', 'Help'].map((t) => (
            <MenuTab key={t} $active={t === 'Charts'}>{t}</MenuTab>
          ))}
          <Spacer />
          <OnDemand>
            <svg width="12" height="10" viewBox="0 0 24 20" fill="none" stroke="#e4e4e4" strokeWidth="1.8"><circle cx="15" cy="11" r="7.5" /><path d="M15 6v5l4 2" /><path d="M13 1C6 2 4 7 5 12H1l6 7 6-7H9c-1-4 0-8 4-11z" fill="#f4f4f4" stroke="none" /></svg>
            OnDemand
          </OnDemand>
        </MenuBar>
        <SubBar>
          <SubTab $active>
            <svg width="9" height="9" viewBox="0 0 18 18" fill="none" stroke="#b01020" strokeWidth="3"><path d="M2 18v-5M7 18V9M12 18V5M16.500 18V1" /></svg>
            Charts
          </SubTab>
          <SubTab>
            <svg width="9" height="9" viewBox="0 0 18 18" fill="#8ec8f0"><path d="M0 0h8v5H0zM10 0h8v10h-8zM0 7h8v11H0z" /><path d="M10 12h8v6h-8z" fill="#e4f0f8" /></svg>
            Flexible Grid
          </SubTab>
          <SubTab>
            <svg width="9" height="9" viewBox="0 0 18 18" fill="none" stroke="#2f7cd8" strokeWidth="2"><rect x="1" y="1" width="16" height="16" /><path d="M4 13c3 0 3-8 6-8s2 6 5 6M4 9h4" /></svg>
            Product Depth
          </SubTab>
          <SubTab>
            <svg width="9" height="9" viewBox="0 0 18 18" fill="#2498dc"><path d="M0 2h4v14H0zM6 2h5v14H6z" /><path d="M13 2h5v14h-5z" fill="#38b4f0" /></svg>
            Bookmap
          </SubTab>
          <Spacer />
          <SubTool aria-label="Grid layout">
            <svg width="15" height="10" viewBox="0 0 15 10" fill="none" stroke="#c8c8c8"><path d="M.5.5h14v9H.5zM.5 3.500h14M.5 6.500h14M5.500.5v9M9.500.5v9" /></svg>
          </SubTool>
          <SubGap />
          <ToolButton aria-label="Workspace menu"><ListIcon /><Corner /></ToolButton>
        </SubBar>
        <PanelGrid>
          {charts.map((c) => <ChartPanel key={c.id} c={c} />)}
        </PanelGrid>
      </Workspace>
    </Body>
  </Shell>
);

export default App;
